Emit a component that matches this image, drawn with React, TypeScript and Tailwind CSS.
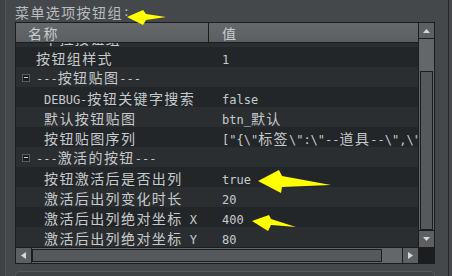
import React from "react";

// ---- Data ---------------------------------------------------------------

type Row = { name: string; value?: string; group?: boolean; indent?: number };

const rows: Row[] = [
  { name: "下拉按钮组·", indent: 44 },
  { name: "按钮组样式", value: "1", indent: 36 },
  { name: "---按钮贴图---", group: true },
  { name: "DEBUG-按钮关键字搜索", value: "false", indent: 44 },
  { name: "默认按钮贴图", value: "btn_默认", indent: 44 },
  { name: "按钮贴图序列", value: '["{\\"标签\\":\\"--道具--\\",\\"', indent: 44 },
  { name: "---激活的按钮---", group: true },
  { name: "按钮激活后是否出列", value: "true", indent: 44 },
  { name: "激活后出列变化时长", value: "20", indent: 44 },
  { name: "激活后出列绝对坐标 X", value: "400", indent: 44 },
  { name: "激活后出列绝对坐标 Y", value: "80", indent: 44 },
];

// ---- Helpers --------------------------------------------------------------

// CJK glyphs are double width next to the mono latin
function Txt({ s }: { s: string }) {
  const parts = s.split(/([\u3000-\u9fff\uff00-\uffef]+)/);
  return (
    <>
      {parts.map((p, i) =>
        p === "" ? null : /[\u3000-\u9fff\uff00-\uffef]/.test(p) ? (
          <span key={i} className="font-['Noto_Sans_CJK_SC',sans-serif] text-[14px] tracking-[1.4px]">
            {p}
          </span>
        ) : (
          <span key={i} className="font-['DejaVu_Sans_Mono',monospace] text-[12px] whitespace-pre">
            {p}
          </span>
        )
      )}
    </>
  );
}

function Arrow({ className, w, h, points }: { className: string; w: number; h: number; points: string }) {
  return (
    <svg className={className} width={w} height={h} viewBox={`0 0 ${w} ${h}`}>
      <polygon points={points} fill="#ffff00" />
    </svg>
  );
}

// ---- Component ------------------------------------------------------------

export default function App() {
  return (
    <div className="relative flex h-[276px] w-[452px] overflow-hidden bg-[#45484b] text-[#c6cacd]">
      {/* left edge */}
      <div className="w-[6px] shrink-0 border-r border-[#505357] bg-[#3f4245]" />

      <div className="flex w-[436px] shrink-0 flex-col pl-[9px]">
        {/* title */}
        <div className="flex h-[22px] shrink-0 items-center pt-[2px] leading-[20px] text-[#b9bdc1]">
          <Txt s="菜单选项按钮组:" />
        </div>

        {/* property grid */}
        <div className="flex h-[242px] w-[420px] shrink-0 border border-[#1b1d1f]">
          <div className="flex w-[402px] flex-col">
            {/* header */}
            <div className="flex h-[20px] shrink-0 items-center border-b border-[#1b1d1f] bg-gradient-to-b from-[#64686b] to-[#5b5f62] leading-[19px] text-[#c9cdd0]">
              <div className="flex h-full w-[193px] items-center border-r border-[#1b1d1f] pl-[12px] pt-[1px]">
                <Txt s="名称" />
              </div>
              <div className="pl-[13px] pt-[1px]">
                <Txt s="值" />
              </div>
            </div>

            {/* body */}
            <div className="h-[204px] shrink-0 overflow-hidden">
              <div className="-mt-[16px]">
                {rows.map((r, i) => (
                  <div
                    key={i}
                    className={`flex h-[20px] pt-[1px] leading-[20px] ${i % 2 === 0 ? "bg-[#2b2e30]" : "bg-[#232628]"}`}
                  >
                    {r.group ? (
                      <div className="flex items-center">
                        <div className="ml-[6px] mr-[6px] flex h-[8px] w-[8px] items-center justify-center border border-[#5a5d60] bg-[#1c1e20]">
                          <div className="h-[1px] w-[4px] bg-[#c6cacd]" />
                        </div>
                        <div className="whitespace-nowrap">
                          <Txt s={r.name} />
                        </div>
                      </div>
                    ) : (
                      <>
                        <div
                          className={`w-[190px] shrink-0 overflow-hidden whitespace-nowrap ${r.indent === 36 ? "pl-[20px]" : "pl-[28px]"}`}
                        >
                          <Txt s={r.name} />
                        </div>
                        <div className="overflow-hidden whitespace-nowrap pl-[16px]">
                          {r.value && <Txt s={r.value} />}
                        </div>
                      </>
                    )}
                  </div>
                ))}
              </div>
            </div>

            {/* horizontal scrollbar */}
            <div className="flex h-[16px] shrink-0 border-t border-[#1b1d1f] bg-[#63676a]">
              <div className="flex w-[16px] items-center justify-center border-r border-[#1b1d1f] bg-[#5c6063]">
                <svg width="5" height="7" viewBox="0 0 5 7">
                  <polygon points="5,0 0,3.5 5,7" fill="#d6d9db" />
                </svg>
              </div>
              <div className="flex flex-1 items-stretch py-[1px] pr-[20px]">
                <div className="flex-1 border border-[#1b1d1f] bg-[#56595c]" />
              </div>
              <div className="flex w-[16px] items-center justify-center border-l border-[#1b1d1f] bg-[#5c6063]">
                <svg width="5" height="7" viewBox="0 0 5 7">
                  <polygon points="0,0 5,3.5 0,7" fill="#d6d9db" />
                </svg>
              </div>
            </div>
          </div>

          {/* vertical scrollbar */}
          <div className="flex w-[16px] flex-col border-l border-[#1b1d1f]">
            <div className="flex h-[16px] shrink-0 items-center justify-center border-b border-[#1b1d1f] bg-[#5c6063]">
              <svg width="7" height="4" viewBox="0 0 7 4">
                <polygon points="0,4 3.5,0 7,4" fill="#d6d9db" />
              </svg>
            </div>
            <div className="flex flex-1 flex-col bg-[#63676a] px-[1px] pt-[32px]">
              <div className="flex-1 border border-[#1b1d1f] bg-[#56595c]" />
            </div>
            <div className="flex h-[17px] shrink-0 items-center justify-center border-t border-[#1b1d1f] bg-[#5c6063]">
              <svg width="7" height="4" viewBox="0 0 7 4">
                <polygon points="0,0 7,0 3.5,4" fill="#d6d9db" />
              </svg>
            </div>
            <div className="h-[16px] shrink-0 border-t border-[#1b1d1f] bg-[#1c1d1e]" />
          </div>
        </div>

        {/* next panel, cut off */}
        <div className="mt-[7px] h-[10px] w-[420px] shrink-0 rounded-t-[4px] border border-[#55585b] bg-[#3f4245]" />
      </div>

      {/* right edge */}
      <div className="ml-[6px] flex-1 border-l border-[#26282a] bg-[#47494c]" />

      {/* callout arrows */}
      <Arrow className="absolute left-[127px] top-[10px]" w={40} h={16} points="0,7 16,0 19,4 39,7 19,10 16,15" />
      <Arrow className="absolute left-[258px] top-[170px]" w={74} h={24} points="0,11 21,0 24,6 73,15 24,17 23,23" />
      <Arrow className="absolute left-[252px] top-[214px]" w={45} h={18} points="0,7 17,1 19,5 44,13 19,11 16,17" />
    </div>
  );
}
